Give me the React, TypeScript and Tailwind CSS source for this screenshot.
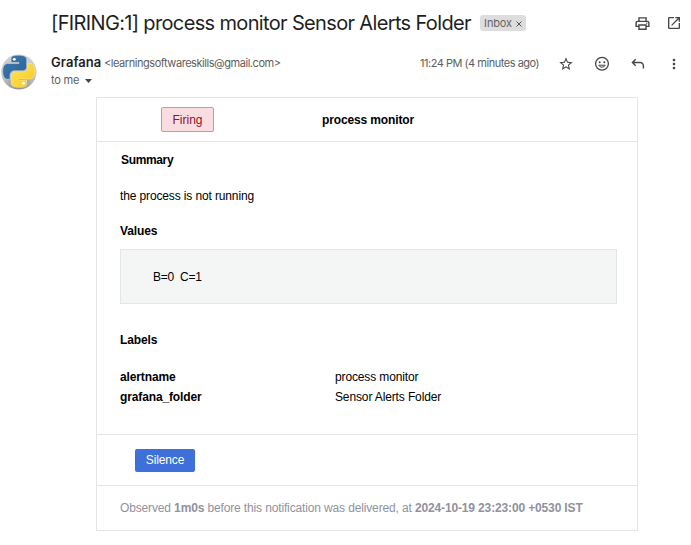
import React from "react";
import { MdOutlinePrint, MdOpenInNew, MdStarOutline, MdMoreVert } from "react-icons/md";

const SNAKE =
  "M14.25.18l.9.2.73.26.59.3.45.32.34.34.25.34.16.33.1.3.04.26.02.2-.01.13V8.5l-.05.63-.13.55-.21.46-.26.38-.3.31-.33.25-.35.19-.35.14-.33.1-.3.07-.26.04-.21.02H8.77l-.69.05-.59.14-.5.22-.41.27-.33.32-.27.35-.2.36-.15.37-.1.35-.07.32-.04.27-.02.21v3.06H3.17l-.21-.03-.28-.07-.32-.12-.35-.18-.36-.26-.36-.36-.35-.46-.32-.59-.28-.73-.21-.88-.14-1.05-.05-1.23.06-1.22.16-1.04.24-.87.32-.71.36-.57.4-.44.42-.33.42-.24.4-.16.36-.1.32-.05.24-.01h.16l.06.01h8.16v-.83H6.18l-.01-2.75-.02-.37.05-.34.11-.31.17-.28.25-.26.31-.23.38-.2.44-.18.51-.15.58-.12.64-.1.71-.06.77-.04.84-.02 1.27.05z";

function Avatar() {
  return (
    <svg className="h-9 w-9 shrink-0" viewBox="0 0 36 36">
      <defs>
        <radialGradient id="disc" cx="50%" cy="85%" r="85%">
          <stop offset="0" stopColor="#858585" />
          <stop offset="0.45" stopColor="#b8b8b8" />
          <stop offset="1" stopColor="#d4d4d4" />
        </radialGradient>
        <linearGradient id="blue" x1="0" y1="0" x2="1" y2="1">
          <stop offset="0" stopColor="#3a7ab5" />
          <stop offset="1" stopColor="#2f618f" />
        </linearGradient>
        <linearGradient id="yellow" x1="1" y1="1" x2="0" y2="0">
          <stop offset="0" stopColor="#ffe45c" />
          <stop offset="1" stopColor="#f6c91d" />
        </linearGradient>
      </defs>
      <circle cx="17.8" cy="18" r="17.6" fill="url(#disc)" />
      <g transform="translate(1.8 1.2) scale(1.34)">
        <path d={SNAKE} fill="url(#blue)" stroke="#e9eef2" strokeWidth="0.35" />
        <path d={SNAKE} fill="url(#yellow)" stroke="#f3efd8" strokeWidth="0.35" transform="rotate(180 12 12)" />
        <circle cx="8.6" cy="3.1" r="1.1" fill="#fff" />
        <circle cx="15.4" cy="20.9" r="1.1" fill="#fff" />
      </g>
    </svg>
  );
}

function Smile() {
  return (
    <svg className="h-4 w-4" viewBox="0 0 16 16" fill="none" stroke="#444746" strokeWidth="1.3">
      <circle cx="8" cy="7.8" r="6.4" />
      <circle cx="5.7" cy="6.2" r="1" fill="#444746" stroke="none" />
      <circle cx="10.3" cy="6.2" r="1" fill="#444746" stroke="none" />
      <path d="M4.8 9.2h6.4a3.3 2.6 0 0 1-6.4 0z" strokeWidth="1" />
    </svg>
  );
}

function Reply() {
  return (
    <svg className="h-4 w-4" viewBox="0 0 16 16" fill="none" stroke="#444746" strokeWidth="1.4">
      <path d="M5.7 3.2L2.4 6.5l3.3 3.3M2.6 6.5h7.6a3.2 3.2 0 0 1 3.2 3.2v2.9" />
    </svg>
  );
}

export default function App() {
  return (
    <div className="h-[545px] w-[691px] overflow-hidden bg-white font-['Liberation_Sans',Arial,sans-serif] text-xs tracking-[-0.13px] text-black">
      <header className="flex h-[46px] items-center pl-[51px] pr-[9px] font-['Inter',sans-serif] text-[#1f1f1f]">
        <h1 className="w-[429px] whitespace-nowrap text-[20px] leading-6 tracking-[-0.65px]">
          [FIRING:1] process monitor Sensor Alerts Folder
        </h1>
        <div className="flex h-4 w-[46px] items-center justify-center gap-1 rounded-[3px] bg-[#ddd] text-[11px] tracking-[-0.15px] text-[#666]">
          <span>Inbox</span>
          <svg className="mt-0.5 h-[6px] w-[6px]" viewBox="0 0 6 6" stroke="#555" strokeWidth="1">
            <path d="M.5 .5l5 5M5.5 .5l-5 5" />
          </svg>
        </div>
        <div className="ml-auto flex items-center gap-4 text-base text-[#444746]">
          <MdOutlinePrint className="-mr-px text-[17px]" />
          <MdOpenInNew />
        </div>
      </header>

      <section className="flex h-[51px] pl-px font-['Inter',sans-serif] text-[#5e5e5e]">
        <div className="pt-2">
          <Avatar />
        </div>
        <div className="ml-[14px] w-[369px] pt-[9px]">
          <div className="flex h-4 items-center whitespace-nowrap">
            <span className="w-[53px] text-[13px] font-semibold tracking-[0.05px] text-[#1f1f1f]">Grafana</span>
            <span className="text-[11px] tracking-[-0.45px]">&lt;learningsoftwareskills@gmail.com&gt;</span>
          </div>
          <div className="mt-px flex h-4 items-center gap-[6px] text-[11px] tracking-[-0.2px]">
            <span>to me</span>
            <svg className="mt-px h-1 w-[7px]" viewBox="0 0 7 4">
              <path d="M0 0h7L3.5 4z" fill="#444746" />
            </svg>
          </div>
        </div>
        <div className="flex h-[18px] items-center pt-[17px]">
          <span className="w-[138px] whitespace-nowrap text-[11px] tracking-[-0.48px]">11:24 PM (4 minutes ago)</span>
          <div className="flex gap-5 text-base text-[#444746]">
            <MdStarOutline />
            <Smile />
            <Reply />
            <MdMoreVert />
          </div>
        </div>
      </section>

      <main className="ml-24 h-[434px] w-[542px] border border-[#e4e5e6]">
        <div className="flex h-[44px] items-center border-b border-[#e4e5e6] pl-16">
          <span className="flex h-[25px] w-[53px] items-center justify-center rounded-[2px] border border-[#e88b98] bg-[#fadde1] tracking-normal text-[#8f1230]">
            Firing
          </span>
          <strong className="ml-[108px]">process monitor</strong>
        </div>
        <div className="h-[293px] border-b border-[#e4e5e6] pl-[23px] pr-5 pt-[10px] leading-4">
          <h2 className="pl-px font-bold tracking-[-0.35px]">Summary</h2>
          <p className="mt-5">the process is not running</p>
          <h2 className="mt-[19px] font-bold">Values</h2>
          <pre className="mt-[10px] flex h-[55px] items-center border border-[#e4e5e6] bg-[#f4f5f5] pl-8 font-['Liberation_Sans',Arial,sans-serif] tracking-[-0.25px]">
            B=0  C=1
          </pre>
          <h2 className="mt-7 font-bold">Labels</h2>
          <dl className="mt-[19px] grid grid-cols-[215px_1fr] leading-5">
            <dt className="font-bold">alertname</dt>
            <dd>process monitor</dd>
            <dt className="font-bold">grafana_folder</dt>
            <dd>Sensor Alerts Folder</dd>
          </dl>
        </div>
        <div className="flex h-[51px] items-center border-b border-[#e4e5e6] pl-[38px]">
          <button className="h-[23px] w-[60px] rounded-[2px] bg-[#3d71d9] text-white">Silence</button>
        </div>
        <p className="flex h-[44px] items-center whitespace-pre pl-[23px] tracking-[-0.14px] text-[#91929e]">
          <span>Observed <b>1m0s</b> before this notification was delivered, at <b>2024-10-19 23:23:00 +0530 IST</b></span>
        </p>
      </main>
    </div>
  );
}
